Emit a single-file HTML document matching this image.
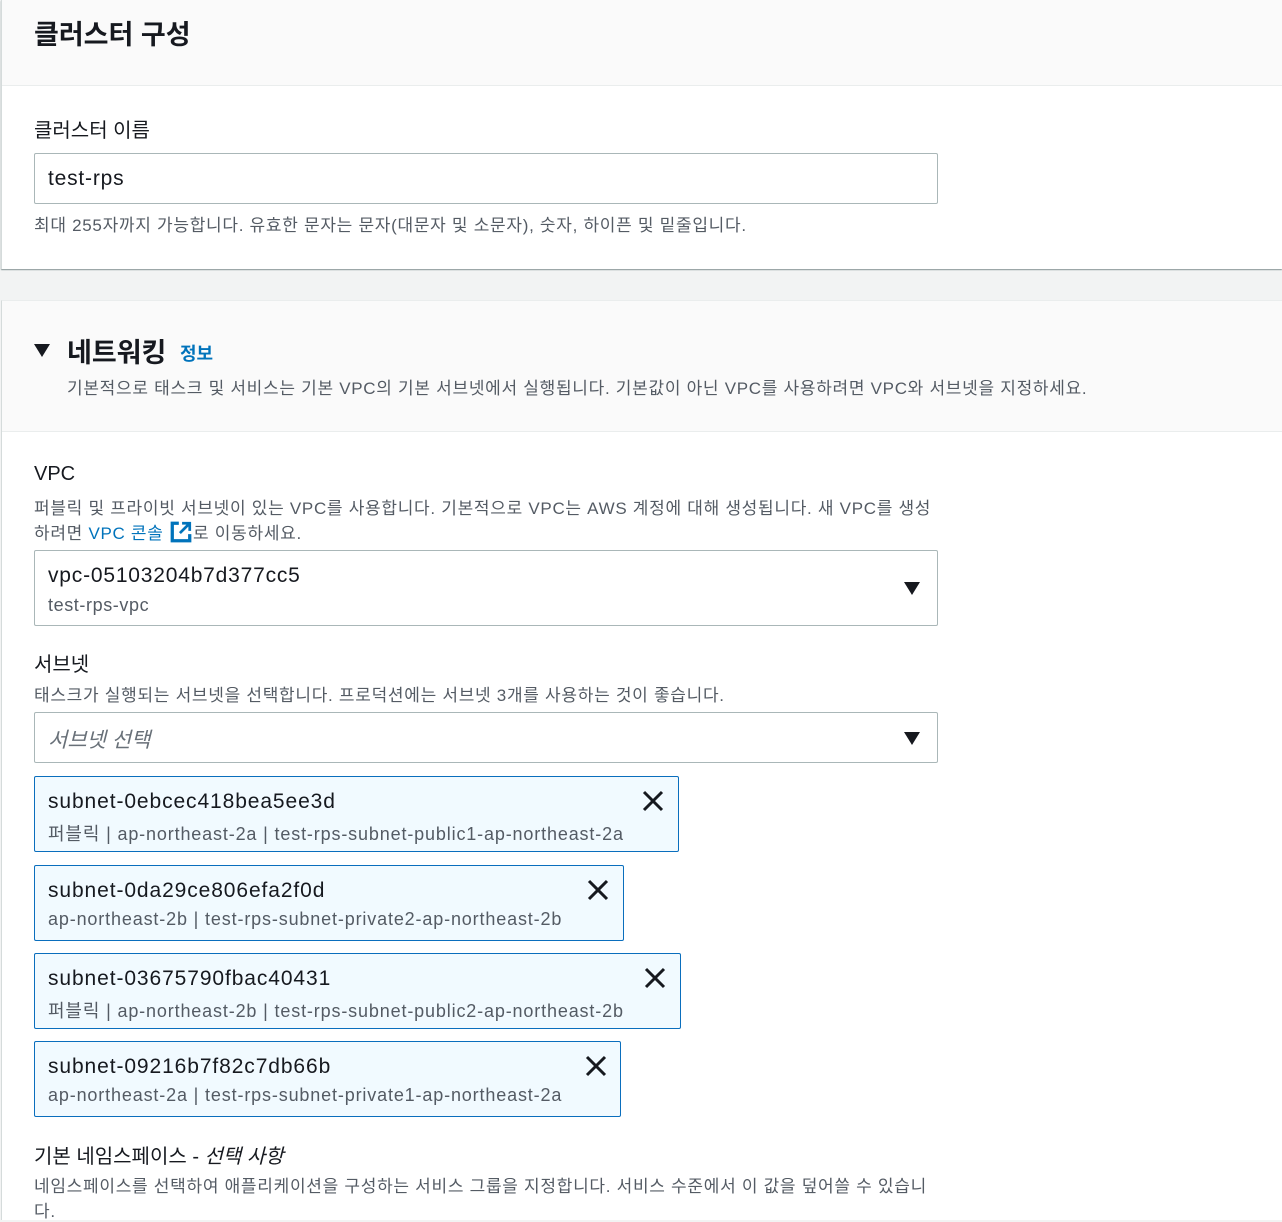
<!DOCTYPE html>
<html><head><meta charset="utf-8"><style>
*{box-sizing:border-box;margin:0;padding:0}
body{width:1282px;height:1216px;overflow:hidden;background:#f2f3f3;font-family:"Liberation Sans","Noto Sans CJK KR",sans-serif;color:#16191f;position:relative}
.a{position:absolute;white-space:nowrap}
.p1{position:absolute;left:1px;top:0;width:1281px;height:269px;background:#fff;border-left:1px solid #d5dbdb;box-shadow:0 1px 1px #879596}
.h1{position:absolute;left:0;top:0;right:0;height:86px;background:#fafafa;border-bottom:1px solid #eaeded}
.p2{position:absolute;left:1px;top:300px;width:1281px;height:920px;background:#fff;border-left:1px solid #d5dbdb;border-top:1px solid #eaeded}
.h2{position:absolute;left:0;top:0;right:0;height:131px;background:#fafafa;border-bottom:1px solid #eaeded}
.lbl{font-size:20px;color:#16191f}
.desc{font-size:17px;color:#545b64;letter-spacing:.7px}
.inp{position:absolute;left:34px;width:904px;border:1px solid #aab7b8;border-radius:2px;background:#fff}
.tok{position:absolute;left:34px;height:76px;border:1px solid #0a6ebd;border-radius:2px;background:#f1faff}
.tok .t{position:absolute;left:13px;top:13px;font-size:21px;color:#16191f;letter-spacing:.9px}
.tok .s{position:absolute;left:13px;top:43px;font-size:18px;color:#545b64;letter-spacing:.85px}
.x{position:absolute;top:12px;width:24px;height:24px}
.tri{position:absolute;left:869px;width:0;height:0;border-left:8px solid transparent;border-right:8px solid transparent;border-top:13px solid #16191f}
</style></head><body>
<div class="p1"><div class="h1"></div></div>
<div class="a" style="left:34px;top:13px;font-size:27px;font-weight:bold">클러스터 구성</div>
<div class="a lbl" style="left:34px;top:114px">클러스터 이름</div>
<div class="inp" style="top:153px;height:51px"><div class="a" style="left:13px;top:13px;font-size:21px;letter-spacing:.8px">test-rps</div></div>
<div class="a desc" style="left:34px;top:211px">최대 255자까지 가능합니다. 유효한 문자는 문자(대문자 및 소문자), 숫자, 하이픈 및 밑줄입니다.</div>

<div class="p2"><div class="h2"></div></div>
<div class="a" style="left:34px;top:344px;width:0;height:0;border-left:8px solid transparent;border-right:8px solid transparent;border-top:13px solid #16191f"></div>
<div class="a" style="left:67px;top:331px;font-size:27px;font-weight:bold">네트워킹</div>
<div class="a" style="left:180px;top:340px;font-size:18px;font-weight:bold;color:#0073bb">정보</div>
<div class="a desc" style="left:67px;top:374px">기본적으로 태스크 및 서비스는 기본 VPC의 기본 서브넷에서 실행됩니다. 기본값이 아닌 VPC를 사용하려면 VPC와 서브넷을 지정하세요.</div>

<div class="a lbl" style="left:34px;top:463px">VPC</div>
<div class="a desc" style="left:34px;top:494px">퍼블릭 및 프라이빗 서브넷이 있는 VPC를 사용합니다. 기본적으로 VPC는 AWS 계정에 대해 생성됩니다. 새 VPC를 생성</div>
<div class="a desc" style="left:34px;top:519px">하려면 <span style="color:#0073bb">VPC 콘솔 <svg width="24" height="24" viewBox="0 0 22 22" style="vertical-align:-5px"><path d="M9 3H3v16h16v-6" fill="none" stroke="#0073bb" stroke-width="3"/><path d="M12 3h7v7M19 3l-9 9" fill="none" stroke="#0073bb" stroke-width="2.5"/></svg></span>로 이동하세요.</div>
<div class="inp" style="top:550px;height:76px">
<div class="a" style="left:13px;top:13px;font-size:21px;letter-spacing:.8px">vpc-05103204b7d377cc5</div>
<div class="a" style="left:13px;top:44px;font-size:18px;color:#545b64;letter-spacing:.6px">test-rps-vpc</div>
<div class="tri" style="top:31px"></div></div>

<div class="a lbl" style="left:34px;top:648px">서브넷</div>
<div class="a desc" style="left:34px;top:681px">태스크가 실행되는 서브넷을 선택합니다. 프로덕션에는 서브넷 3개를 사용하는 것이 좋습니다.</div>
<div class="inp" style="top:712px;height:51px">
<div class="a" style="left:13px;top:11px;font-size:21px;font-style:italic;color:#687078">서브넷 선택</div>
<div class="tri" style="top:19px"></div></div>

<div class="tok" style="top:776px;width:645px"><div class="t">subnet-0ebcec418bea5ee3d</div><div class="s">퍼블릭 | ap-northeast-2a | test-rps-subnet-public1-ap-northeast-2a</div>
<svg class="x" style="left:606px" viewBox="0 0 24 24"><path d="M3 3l18 18M21 3L3 21" stroke="#16191f" stroke-width="3"/></svg></div>
<div class="tok" style="top:865px;width:590px"><div class="t">subnet-0da29ce806efa2f0d</div><div class="s">ap-northeast-2b | test-rps-subnet-private2-ap-northeast-2b</div>
<svg class="x" style="left:551px" viewBox="0 0 24 24"><path d="M3 3l18 18M21 3L3 21" stroke="#16191f" stroke-width="3"/></svg></div>
<div class="tok" style="top:953px;width:647px"><div class="t">subnet-03675790fbac40431</div><div class="s">퍼블릭 | ap-northeast-2b | test-rps-subnet-public2-ap-northeast-2b</div>
<svg class="x" style="left:608px" viewBox="0 0 24 24"><path d="M3 3l18 18M21 3L3 21" stroke="#16191f" stroke-width="3"/></svg></div>
<div class="tok" style="top:1041px;width:587px"><div class="t">subnet-09216b7f82c7db66b</div><div class="s">ap-northeast-2a | test-rps-subnet-private1-ap-northeast-2a</div>
<svg class="x" style="left:549px" viewBox="0 0 24 24"><path d="M3 3l18 18M21 3L3 21" stroke="#16191f" stroke-width="3"/></svg></div>

<div class="a lbl" style="left:34px;top:1140px">기본 네임스페이스 - <i>선택 사항</i></div>
<div class="a desc" style="left:34px;top:1172px">네임스페이스를 선택하여 애플리케이션을 구성하는 서비스 그룹을 지정합니다. 서비스 수준에서 이 값을 덮어쓸 수 있습니</div>
<div class="a desc" style="left:34px;top:1197px">다.</div>
</body></html>
